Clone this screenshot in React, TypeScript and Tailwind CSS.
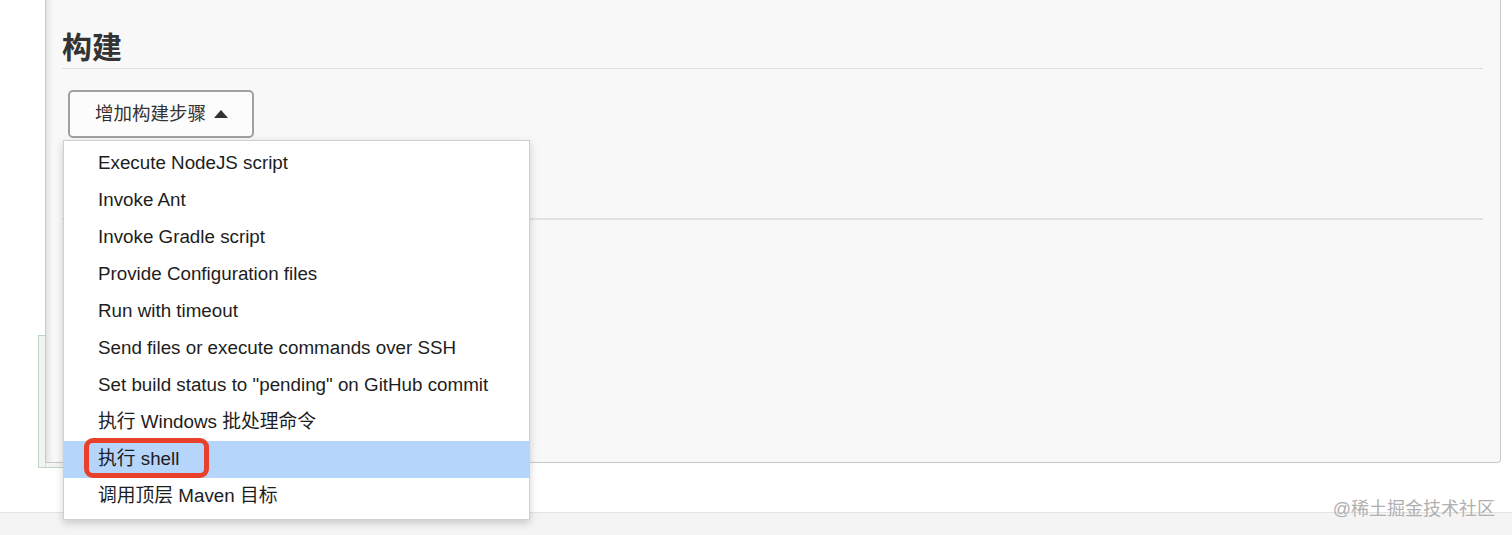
import React from "react";

const FONT = { fontFamily: '"Liberation Sans", "Noto Sans CJK SC", sans-serif' };

const STEPS = [
    "Execute NodeJS script",
    "Invoke Ant",
    "Invoke Gradle script",
    "Provide Configuration files",
    "Run with timeout",
    "Send files or execute commands over SSH",
    'Set build status to "pending" on GitHub commit',
    "执行 Windows 批处理命令",
    "执行 shell",
    "调用顶层 Maven 目标",
];

function StepMenu() {
    return (
        <div className="absolute left-[63px] top-[140px] w-[467px] bg-white border border-[#cfcfcf] py-[4px] shadow-[0_3px_8px_rgba(0,0,0,0.18)]">
            {STEPS.map((step) => {
                const active = step === "执行 shell";
                return (
                    <div
                        key={step}
                        className={
                            "relative h-[37px] flex items-center pl-[34px] text-[18.8px] text-[#1d1d1d] " +
                            (active ? "bg-[#b5d5fb]" : "")
                        }
                    >
                        {active && (
                            <span className="absolute left-[20px] top-[-3px] w-[125px] h-[40px] border-[5px] border-[#e8402a] rounded-[9px]" />
                        )}
                        <span className="relative">{step}</span>
                    </div>
                );
            })}
        </div>
    );
}

export default function App() {
    return (
        <div className="relative w-[1512px] h-[535px] bg-white overflow-hidden" style={FONT}>
            {/* green box peeking out under the menu */}
            <div className="absolute left-[38px] top-[335px] w-[60px] h-[133px] border border-[#bcd6c4] bg-[#f3f4f2]">
                <div className="ml-[6px] h-full border-l border-[#dcdcdc]" />
            </div>

            <div className="flex flex-col h-full">
                <div className="relative ml-[45px] w-[1456px] h-[463px] bg-[#f8f8f8] border-l border-r border-b border-[#c9c9c9] rounded-br-[4px] pl-[16px] pr-[17px] shadow-[inset_7px_0_6px_-5px_rgba(0,0,0,0.12)]">
                    <h2 className="pt-[30px] pb-[2px] text-[30px] leading-[36px] font-bold text-[#333] border-b border-[#dedede]">
                        构建
                    </h2>
                    <button
                        type="button"
                        className="mt-[21px] ml-[6px] w-[186px] h-[48px] flex items-center pl-[25px] gap-[8px] bg-[#fcfcfc] border-2 border-[#a0a0a0] rounded-[5px] text-[18.5px] text-[#333]"
                    >
                        增加构建步骤
                        <svg width="14" height="8" viewBox="0 0 14 8">
                            <path d="M0 8 L7 0 L14 8 Z" fill="#333" />
                        </svg>
                    </button>
                    <div className="mt-[80px] h-[2px] bg-[#e2e2e2]" />
                </div>
                <div className="flex-1" />
                <div className="h-[23px] bg-[#f4f4f4] border-t border-[#e3e3e3]" />
            </div>

            <StepMenu />

            <div className="absolute right-[17px] top-[496px] text-[18px] text-[#b0b0b0]">
                @稀土掘金技术社区
            </div>
        </div>
    );
}
